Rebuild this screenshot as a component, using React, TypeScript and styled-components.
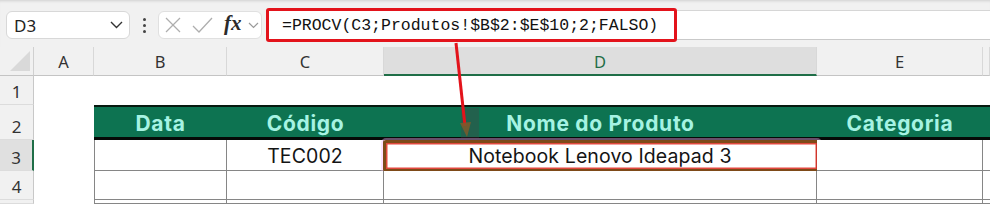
import React from 'react';
import styled, { createGlobalStyle, css } from 'styled-components';

const GREEN = '#0d7351';
const SEL_GREEN = '#1f6e47';

const GlobalStyle = createGlobalStyle`
  html, body { margin: 0; padding: 0; background: #ffffff; }
  body { width: 990px; height: 204px; overflow: hidden; font-family: "Noto Sans", "Open Sans", sans-serif; }
  * { box-sizing: border-box; }
`;

const Page = styled.div`
  position: relative;
  width: 990px;
  height: 204px;
  overflow: hidden;
  background: #ffffff;
`;

const FormulaBar = styled.div`
  height: 47px;
  background: #f1f1f1;
  display: flex;
  align-items: center;
  padding: 3px 0 0 6px;
  box-shadow: inset 0 3px 3px -2px rgba(0, 0, 0, 0.14);
`;

const NameBox = styled.div`
  width: 124px;
  height: 28px;
  background: #ffffff;
  border: 1px solid #d8d8d8;
  border-radius: 6px;
  display: flex;
  align-items: center;
  justify-content: space-between;
  padding: 0 6px 0 7px;
  font-family: "Noto Sans", sans-serif;
  font-size: 17px;
  color: #222;
`;

const Dots = styled.div`
  width: 28px;
  height: 28px;
  display: flex;
  flex-direction: column;
  align-items: center;
  justify-content: center;
  gap: 3px;
  span {
    width: 3px;
    height: 3px;
    border-radius: 50%;
    background: #444;
  }
`;

const ButtonBox = styled.div`
  width: 104px;
  height: 28px;
  background: #ffffff;
  border: 1px solid #e0e0e0;
  border-radius: 6px;
  display: flex;
  align-items: center;
  padding-left: 6px;
`;

const Fx = styled.span`
  font-family: "Liberation Serif", "DejaVu Serif", serif;
  font-style: italic;
  font-weight: 700;
  font-size: 21px;
  color: #2b2b2b;
  margin-left: 11px;
  line-height: 1;
  margin-top: -3px;
`;

const FormulaInput = styled.div`
  flex: 1;
  height: 30px;
  margin-left: 4px;
  background: #ffffff;
  border-top: 1px solid #d6d6d6;
  border-bottom: 1px solid #c9c9c9;
  display: flex;
  align-items: center;
`;

const FormulaHighlight = styled.div`
  width: 411px;
  height: 34px;
  border: 3.5px solid #e3131b;
  border-radius: 3px;
  display: flex;
  align-items: center;
  padding-left: 13px;
  font-family: "Liberation Mono", "DejaVu Sans Mono", monospace;
  font-size: 16.5px;
  color: #111;
  white-space: nowrap;
  background: #fff;
  position: relative;
  z-index: 1;
`;

const Sheet = styled.div`
  display: grid;
  grid-template-columns: 34px 60px 133px 157px 433px 166px 1fr;
  grid-template-rows: 29px 29px 35px 31px 29px 1fr;
  height: 157px;
`;

const Corner = styled.div`
  background: #f1f1f1;
  border-right: 1px solid #d0d0d0;
  border-bottom: 1px solid #c4c4c4;
  position: relative;
  &::after {
    content: '';
    position: absolute;
    right: 3px;
    bottom: 4px;
    width: 20px;
    height: 20px;
    background: #d9d9d9;
    clip-path: polygon(100% 0, 100% 100%, 0 100%);
  }
`;

const ColHeader = styled.div<{ $selected?: boolean }>`
  background: #f1f1f1;
  border-right: 1px solid #d8d8d8;
  border-bottom: 1px solid #c4c4c4;
  display: flex;
  align-items: center;
  justify-content: center;
  font-family: "Noto Sans", sans-serif;
  font-size: 16.5px;
  color: #333;
  padding-top: 1px;
  ${(p) =>
    p.$selected &&
    css`
      background: #dedede;
      color: ${SEL_GREEN};
      border-bottom: 2px solid ${SEL_GREEN};
    `}
`;

const RowHeader = styled.div<{ $selected?: boolean; $shift?: number }>`
  background: #f1f1f1;
  border-right: 1px solid #c8c8c8;
  border-bottom: 1px solid #dcdcdc;
  display: flex;
  align-items: center;
  justify-content: center;
  font-family: "Noto Sans", sans-serif;
  font-size: 17px;
  color: #333;
  padding-top: ${(p) => p.$shift ?? 0}px;
  ${(p) =>
    p.$selected &&
    css`
      background: #e0e0e0;
      border-right: 2px solid ${SEL_GREEN};
    `}
`;

const Blank = styled.div<{ $span?: number }>`
  background: #ffffff;
  grid-column: span ${(p) => p.$span ?? 1};
`;

const TableHead = styled.div`
  background: ${GREEN};
  border-top: 2px solid #061a10;
  border-bottom: 3px solid #050a07;
  display: flex;
  align-items: center;
  justify-content: center;
  padding-top: 2px;
  font-family: "Inter", "Noto Sans", sans-serif;
  font-weight: 700;
  font-size: 21px;
  letter-spacing: 0.7px;
  color: #a6f3e3;
  white-space: nowrap;
`;

const DataCell = styled.div<{ $first?: boolean; $selected?: boolean; $noRight?: boolean }>`
  background: #ffffff;
  border-right: ${(p) => (p.$noRight ? 'none' : '1px solid #868686')};
  border-bottom: 1px solid #868686;
  ${(p) => p.$first && css`border-left: 1px solid #868686;`}
  display: flex;
  align-items: center;
  justify-content: center;
  font-family: "Inter", "Noto Sans", sans-serif;
  font-size: 19.5px;
  letter-spacing: 0.1px;
  color: #141414;
  white-space: nowrap;
  padding-top: 1px;
  position: relative;
  ${(p) =>
    p.$selected &&
    css`
      &::after {
        content: '';
        position: absolute;
        left: -1px;
        top: 0;
        right: -4px;
        bottom: -2px;
        border: 3.5px solid #7e4a18;
        border-radius: 3px;
        box-shadow: 0 0 0 2px rgba(255, 180, 255, 0.4), inset 0 0 0 1.5px rgba(220, 40, 28, 0.85);
        pointer-events: none;
      }
    `}
`;

const ArrowLayer = styled.svg`
  position: absolute;
  left: 0;
  top: 0;
  pointer-events: none;
  z-index: 2;
`;

export default function App() {
  const cols = ['A', 'B', 'C', 'D', 'E'];
  return (
    <Page>
      <GlobalStyle />
      <FormulaBar>
        <NameBox>
          <span>D3</span>
          <svg width="13" height="8" viewBox="0 0 13 8">
            <polyline points="1,1 6.5,6.5 12,1" fill="none" stroke="#333" strokeWidth="1.4" />
          </svg>
        </NameBox>
        <Dots>
          <span />
          <span />
          <span />
        </Dots>
        <ButtonBox>
          <svg width="16" height="16" viewBox="0 0 16 16">
            <line x1="1" y1="1" x2="15" y2="15" stroke="#aeaeae" strokeWidth="1.3" />
            <line x1="15" y1="1" x2="1" y2="15" stroke="#aeaeae" strokeWidth="1.3" />
          </svg>
          <svg width="21" height="16" viewBox="0 0 21 16" style={{ marginLeft: 11 }}>
            <polyline points="1,9 7,15 20,1" fill="none" stroke="#aeaeae" strokeWidth="1.3" />
          </svg>
          <Fx>fx</Fx>
          <svg width="11" height="7" viewBox="0 0 11 7" style={{ marginLeft: 6 }}>
            <polyline points="1,1 5.5,5.5 10,1" fill="none" stroke="#9a9a9a" strokeWidth="1.2" />
          </svg>
        </ButtonBox>
        <FormulaInput>
          <FormulaHighlight>=PROCV(C3;Produtos!$B$2:$E$10;2;FALSO)</FormulaHighlight>
        </FormulaInput>
      </FormulaBar>

      <Sheet>
        <Corner />
        {cols.map((c) => (
          <ColHeader key={c} $selected={c === 'D'}>
            {c}
          </ColHeader>
        ))}
        <ColHeader />

        <RowHeader $shift={2}>1</RowHeader>
        <Blank $span={6} />

        <RowHeader $shift={8}>2</RowHeader>
        <Blank />
        <TableHead>Data</TableHead>
        <TableHead>Código</TableHead>
        <TableHead>Nome do Produto</TableHead>
        <TableHead>Categoria</TableHead>
        <TableHead />

        <RowHeader $selected $shift={4}>3</RowHeader>
        <Blank />
        <DataCell $first />
        <DataCell>TEC002</DataCell>
        <DataCell $selected>Notebook Lenovo Ideapad 3</DataCell>
        <DataCell />
        <DataCell $noRight />

        <RowHeader $shift={2}>4</RowHeader>
        <Blank />
        <DataCell $first />
        <DataCell />
        <DataCell />
        <DataCell />
        <DataCell $noRight />

        <RowHeader />
        <Blank />
        <DataCell $first />
        <DataCell />
        <DataCell />
        <DataCell />
        <DataCell $noRight />
      </Sheet>

      <ArrowLayer width="990" height="204" viewBox="0 0 990 204">
        <rect x="461" y="108" width="18" height="30" fill="rgba(90,50,70,0.28)" />
        <line x1="456" y1="43" x2="465" y2="126" stroke="#e3131b" strokeWidth="3" />
        <polygon points="460,123 471,122 467,137" fill="#7c5a2c" opacity="0.85" />
      </ArrowLayer>
    </Page>
  );
}
